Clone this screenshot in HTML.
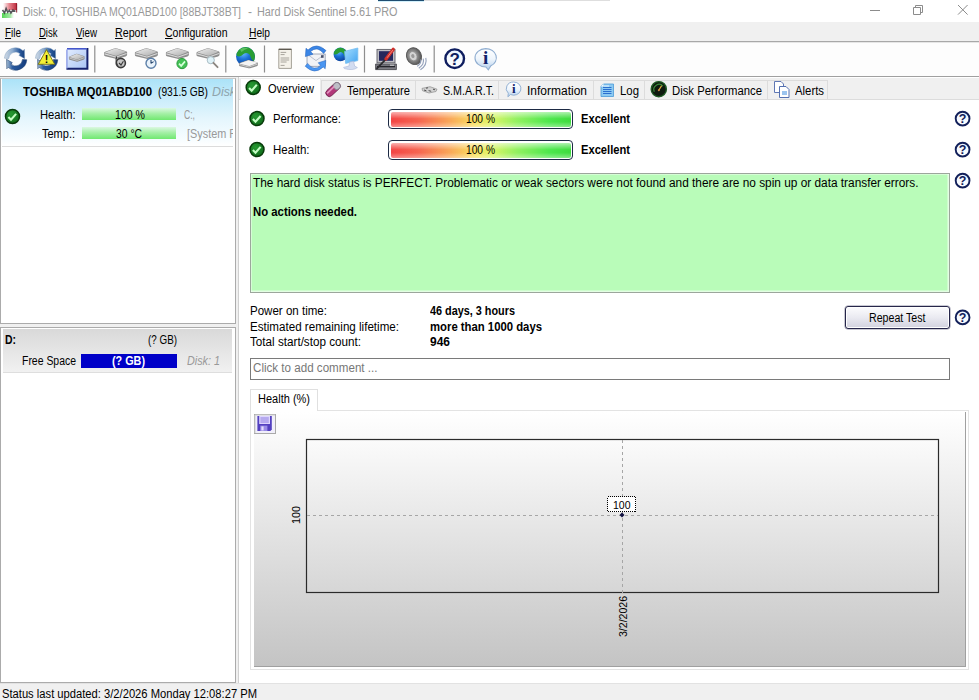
<!DOCTYPE html>
<html><head><meta charset="utf-8"><title>Hard Disk Sentinel</title>
<style>
html,body{margin:0;padding:0}
body{width:979px;height:700px;overflow:hidden;background:#fff;position:relative;font-family:'Liberation Sans',sans-serif;font-size:12px}
.a{position:absolute}
.t{position:absolute;white-space:pre;line-height:14px;height:14px;transform-origin:0 0;font-family:'Liberation Sans',sans-serif}
svg{position:absolute;overflow:visible}
.tab{top:80px;height:20px;background:#f0f0f0;border:1px solid #dcdcdc;box-sizing:border-box}
.bar{width:185px;height:20px;box-sizing:border-box;border:1px solid #1d2a44;border-radius:4px;background:#fff;padding:1.5px 1.5px}
.bar div{width:100%;height:100%;border-radius:2px;background:linear-gradient(rgba(255,255,255,.6),rgba(255,255,255,.05) 45%,rgba(255,255,255,.05) 65%,rgba(255,255,255,.4)),linear-gradient(90deg,#f23a3a 0%,#f55c48 15%,#f9a050 32%,#f8e058 47%,#d8f460 56%,#8cf058 70%,#44e644 88%,#34da34 100%)}

</style></head>
<body>
<!-- title bar -->
<div class="a" style="left:0;top:0;width:979px;height:22px;background:#fff"></div>
<div class="a" style="left:378px;top:0;width:46px;height:1px;background:#1f4d70"></div><div class="a" style="left:378px;top:1px;width:46px;height:1px;background:#d2f0fb"></div><div class="a" style="left:424px;top:0;width:186px;height:1px;background:#dedede"></div>
<!-- menu bar -->
<div class="a" style="left:0;top:22px;width:979px;height:20px;background:#f0f0f0"></div>
<div class="a" style="left:0;top:41px;width:979px;height:1px;background:#a8a8a8"></div><div class="a" style="left:0;top:42px;width:979px;height:1px;background:#e6e6e6"></div>
<!-- toolbar -->
<div class="a" style="left:0;top:43px;width:979px;height:33px;background:#fdfdfd"></div>
<div class="a" style="left:0;top:76px;width:979px;height:1px;background:#a0a0a0"></div>
<!-- main bg -->
<div class="a" style="left:0;top:77px;width:979px;height:607px;background:#f0f0f0"></div>
<!-- left upper panel -->
<div class="a" style="left:0;top:78px;width:234px;height:244px;background:#fff;border:1px solid #ababab;border-top-color:#c8c8c8"></div>
<div class="a" style="left:2px;top:79px;width:231px;height:67px;background:linear-gradient(#abe3f8 0%,#cbedfb 30%,#e5f6fd 60%,#f8fdff 92%,#ffffff 100%);border-bottom:1px solid #dcdcdc"></div>
<!-- left lower panel -->
<div class="a" style="left:0;top:327px;width:234px;height:354px;background:#fff;border:1px solid #ababab"></div>
<div class="a" style="left:3px;top:329px;width:229px;height:43px;background:linear-gradient(#d9d9d9,#f1f1f1);border-bottom:1px solid #dedede"></div>
<div class="a" style="left:81px;top:354px;width:96px;height:14px;background:#0000c8"></div>
<!-- health bars left -->
<div class="a" style="left:82px;top:108px;width:94px;height:12px;background:linear-gradient(#dbf8e2,#a6f0a8 45%,#70e870)"></div>
<div class="a" style="left:82px;top:127px;width:94px;height:12px;background:linear-gradient(#dbf8e2,#a6f0a8 45%,#70e870)"></div>
<!-- right panel -->
<div class="a" style="left:238px;top:77px;width:741px;height:607px;background:#fff;border-left:1px solid #d0d0d0"></div>
<div class="a" style="left:239px;top:78px;width:740px;height:21px;background:#f0f0f0"></div>
<div class="a" style="left:239px;top:99px;width:740px;height:1px;background:#dcdcdc"></div>
<!-- status bar -->
<div class="a" style="left:0;top:683px;width:979px;height:17px;background:#f0f0f0;border-top:1px solid #e2e2e2;box-sizing:border-box"></div>
<!-- tabs -->
<div class="a" style="left:240px;top:78px;width:81px;height:22px;background:#fff;border:1px solid #ececec;border-bottom:0;box-sizing:border-box"></div>
<div class="a tab" style="left:321px;width:95px"></div>
<div class="a tab" style="left:415px;width:84px"></div>
<div class="a tab" style="left:498px;width:96px"></div>
<div class="a tab" style="left:593px;width:52px"></div>
<div class="a tab" style="left:644px;width:124px"></div>
<div class="a tab" style="left:767px;width:61px"></div>
<!-- perf/health bars -->
<div class="a bar" style="left:388px;top:109px"><div></div></div>
<div class="a bar" style="left:388px;top:140px"><div></div></div>
<!-- green box -->
<div class="a" style="left:250px;top:173px;width:700px;height:120px;box-sizing:border-box;background:#b9fcb9;border:1px solid #9ca69c;box-shadow:inset 1px 1px 0 rgba(255,255,255,.4),inset -1.5px -1.5px 0 rgba(255,255,255,.6)"></div>
<!-- repeat test button -->
<div class="a" style="left:845px;top:306px;width:105px;height:23px;box-sizing:border-box;border:1px solid #26264a;border-radius:3px;background:linear-gradient(#fcfcfe,#eaeaf1 50%,#d2d2df);box-shadow:inset 0 0 0 1px #fff, 0 0 0 .5px rgba(40,40,80,.5)"></div>
<!-- comment box -->
<div class="a" style="left:250px;top:358px;width:700px;height:22px;box-sizing:border-box;background:#fff;border:1px solid #7a7a7a"></div>
<!-- health(%) tab + page -->
<div class="a" style="left:250px;top:410px;width:719px;height:260px;box-sizing:border-box;background:#fff;border:1px solid #e3e3e3"></div>
<div class="a" style="left:250px;top:389px;width:68px;height:22px;box-sizing:border-box;background:#fff;border:1px solid #e0e0e0;border-bottom:0"></div>
<!-- chart -->
<div class="a" style="left:254px;top:412px;width:712px;height:255px;box-sizing:border-box;background:linear-gradient(#ffffff,#c4c4c4);border-right:1px solid #a0a0a0;border-bottom:1px solid #a0a0a0"></div>
<svg style="left:0;top:0" width="979" height="700" viewBox="0 0 979 700">
 <defs><linearGradient id="pg" x1="0" y1="0" x2="0" y2="1"><stop offset="0" stop-color="#fbfbfb"/><stop offset="1" stop-color="#d6d6d6"/></linearGradient></defs>
 <rect x="306.5" y="439.5" width="632" height="153" fill="url(#pg)" stroke="#2a2a2a" stroke-width="1.2"/>
 <line x1="307" y1="515.5" x2="938" y2="515.5" stroke="#a6a6a6" stroke-width="1" stroke-dasharray="3,3"/>
 <line x1="622.5" y1="440" x2="622.5" y2="596" stroke="#a6a6a6" stroke-width="1" stroke-dasharray="3,3"/>
 <rect x="607.5" y="496.5" width="28" height="15" fill="#fff" stroke="#000" stroke-width="1" stroke-dasharray="1 1" shape-rendering="crispEdges"/>
 <path d="M622 512.5 l2.5 2.5 l-2.5 2.5 l-2.5 -2.5z" fill="#101040"/>
 <text transform="translate(300,524) rotate(-90)" font-family="Liberation Sans, sans-serif" font-size="11" fill="#000" textLength="18" lengthAdjust="spacingAndGlyphs">100</text>
 <text transform="translate(626.5,637) rotate(-90)" font-family="Liberation Sans, sans-serif" font-size="11" fill="#000" textLength="41" lengthAdjust="spacingAndGlyphs">3/2/2026</text>
</svg>
<svg style="left:0;top:0" width="979" height="700" viewBox="0 0 979 700">
<defs>
 <radialGradient id="gck" cx="0.4" cy="0.35" r="0.7"><stop offset="0" stop-color="#279a32"/><stop offset="1" stop-color="#0f6a1a"/></radialGradient>
 <g id="ck"><circle r="7" fill="url(#gck)" stroke="#083a0a" stroke-width="1.5"/><path d="M-4.1 0.5 L-1.5 3.2 L3.6 -2.6" fill="none" stroke="#c4fcc4" stroke-width="2.1"/></g>
 <linearGradient id="bub2" x1="0" y1="0" x2="0" y2="1"><stop offset="0" stop-color="#ffffff"/><stop offset=".5" stop-color="#eef5fc"/><stop offset="1" stop-color="#b4cfec"/></linearGradient>
 <linearGradient id="ghp" x1="0" y1="0" x2="0" y2="1"><stop offset="0" stop-color="#eaf4ff"/><stop offset="1" stop-color="#ffffff"/></linearGradient>
 <g id="hp"><circle r="6.9" fill="url(#ghp)" stroke="#12205a" stroke-width="1.9"/><text x="0" y="4.4" text-anchor="middle" font-family="Liberation Sans, sans-serif" font-weight="bold" font-size="12.5" fill="#12205a">?</text></g>
</defs>
<!-- check icons -->
<use href="#ck" x="253.2" y="87.4"/>
<use href="#ck" x="257" y="118.6"/>
<use href="#ck" x="257" y="149.5"/>
<use href="#ck" x="12.5" y="116.5"/>
<!-- help icons -->
<use href="#hp" x="962.6" y="118.6"/>
<use href="#hp" x="962.6" y="149.6"/>
<use href="#hp" x="962.6" y="180.6"/>
<use href="#hp" x="962.6" y="317.4"/>
<!-- temperature icon -->
<g transform="translate(333.1,89.5) rotate(-43)">
 <rect x="-8.6" y="-3.5" width="17.2" height="7" rx="3.5" fill="#b2387a" stroke="#74204e" stroke-width="0.9"/>
 <rect x="1.6" y="-3.5" width="7" height="7" rx="3.4" fill="#bdbdc6" stroke="#80808a" stroke-width="0.9"/>
 <rect x="-7" y="-2.2" width="10" height="1.7" fill="#eaa0c8" opacity=".85"/>
</g>
<!-- smart icon -->
<path d="M422 88.4 l8 -1.7 l7 2.5 l-1 2.3 l-7 1.5 l-6.5 -2.3z" fill="#d2d2d2" stroke="#8c8c8c" stroke-width="0.7"/>
<path d="M424 90 l2.4 .8 M428.6 90.6 l2.6 .7 M433 89.2 l2 .6 M426 88.2 l2 -.4" stroke="#444" stroke-width=".9"/>
<!-- information icon (tab) -->
<g transform="translate(513.7,89)">
 <path d="M0 -7 a7.2 6.6 0 1 1 -3.2 12.5 l-2.6 2.3 l0.4 -3.6 a7.2 6.6 0 0 1 5.4 -11.2z" fill="url(#bub2)" stroke="#94b2d4" stroke-width="1"/>
 <text x="0" y="4" text-anchor="middle" font-family="Liberation Serif, serif" font-weight="bold" font-size="13" fill="#10226a">i</text>
</g>
<!-- log icon -->
<g transform="translate(601,84)">
 <path d="M0 2.5 L2.5 0 H12.5 V12.5 H0z" fill="#8ccaf2" stroke="#4a9ad8" stroke-width="0.8"/>
 <path d="M0 2.5 L2.5 0 V2.5z" fill="#fff"/>
 <path d="M2 3.5h8.5M2 5.5h8.5M2 7.5h8.5M2 9.5h8.5" stroke="#2a6fd0" stroke-width="1"/>
 <path d="M3 2h5" stroke="#eaf6ff" stroke-width="1"/>
</g>
<!-- disk performance icon -->
<g transform="translate(658.8,89.2)">
 <circle r="7.6" fill="#0e1a0e" stroke="#1f5a24" stroke-width="1.4"/>
 <path d="M-4.5 2.5 A5.2 5.2 0 0 1 4.2 -3" fill="none" stroke="#3a8a3a" stroke-width="1.2"/>
 <path d="M0 1 L2.8 -3.5" stroke="#e8b040" stroke-width="1.2"/>
 <circle r="1" cy="1" fill="#c84"/>
</g>
<!-- alerts icon -->
<g transform="translate(774,81)">
 <path d="M0.5 0.5 H7 L9.5 3 V11.5 H0.5z" fill="#fff" stroke="#6078b4" stroke-width="1"/>
 <path d="M5.5 5.5 H12 L15 8.5 V16.5 H5.5z" fill="#fff" stroke="#5470b0" stroke-width="1"/>
 <rect x="8" y="10" width="5" height="4" fill="#9cc4ee"/>
</g>
</svg>
<svg style="left:0;top:0" width="979" height="700" viewBox="0 0 979 700">
<defs>
 <linearGradient id="ra" x1="0" y1="0" x2="1" y2="0"><stop offset="0" stop-color="#d3dce6"/><stop offset=".4" stop-color="#8daccf"/><stop offset=".75" stop-color="#2b5a9c"/><stop offset="1" stop-color="#15407f"/></linearGradient>
 <linearGradient id="rb" x1="0" y1="0" x2="1" y2="0"><stop offset="0" stop-color="#a4bcd2"/><stop offset=".3" stop-color="#2a5a9e"/><stop offset="1" stop-color="#143c7c"/></linearGradient>
 <g id="rf">
  <path d="M-11.17 -0.78 A11.2 11.2 0 0 1 7.49 -8.32 L8.83 -9.81 L9.04 -0.32 L3.28 -3.64 L4.62 -5.13 A6.9 6.9 0 0 0 -6.88 -0.48 Z" fill="url(#ra)" stroke="#6f8fb4" stroke-width=".4"/>
  <path d="M11.17 0.78 A11.2 11.2 0 0 1 -7.49 8.32 L-8.83 9.81 L-9.04 0.32 L-3.28 3.64 L-4.62 5.13 A6.9 6.9 0 0 0 6.88 0.48 Z" fill="url(#rb)" stroke="#143667" stroke-width=".5"/>
 </g>
 <linearGradient id="dkt" x1="0" y1="0" x2="1" y2="1"><stop offset="0" stop-color="#ededed"/><stop offset="1" stop-color="#adadad"/></linearGradient>
 <g id="dk">
  <path d="M0.5 5.2 Q0 4.2 1.5 3.6 L10.5 0.4 Q12 0 13.5 0.4 L22.5 3 Q24 3.6 23.5 4.6 V6.6 Q23.4 7.4 22 8 L14 10.2 Q12.5 10.6 11 10 L1.5 7.8 Q0.4 7.4 0.5 6.6 Z" fill="#8d8d8d"/>
  <path d="M1.2 4.4 L11 0.8 Q12 0.5 13 0.8 L22.8 3.6 L13.6 7.2 Q12.4 7.6 11.2 7.2 Z" fill="url(#dkt)"/>
  <path d="M1 5.6 L11.2 8.4 Q12.4 8.8 13.6 8.4 L23 5.2" fill="none" stroke="#d9d9d9" stroke-width="1"/>
 </g>
 <radialGradient id="gl" cx=".38" cy=".3" r=".75"><stop offset="0" stop-color="#6ec0ff"/><stop offset=".45" stop-color="#1d74d8"/><stop offset="1" stop-color="#0a3c94"/></radialGradient>
 <linearGradient id="winf" x1="0" y1="0" x2="1" y2="1"><stop offset="0" stop-color="#e2ecfe"/><stop offset="1" stop-color="#a9c4f4"/></linearGradient>
 <linearGradient id="monf" x1="0" y1="0" x2="1" y2="1"><stop offset="0" stop-color="#a4deff"/><stop offset="1" stop-color="#44a4f0"/></linearGradient>
 <radialGradient id="spk" cx=".45" cy=".45" r=".6"><stop offset="0" stop-color="#d8d8d8"/><stop offset=".5" stop-color="#8a8a8a"/><stop offset="1" stop-color="#4c4c4c"/></radialGradient>
 <linearGradient id="bub" x1="0" y1="0" x2="0" y2="1"><stop offset="0" stop-color="#ffffff"/><stop offset=".5" stop-color="#eef5fc"/><stop offset="1" stop-color="#b4cfec"/></linearGradient>
</defs>
<!-- separators -->
<g stroke="#8e8e8e" stroke-width="1.2">
 <path d="M94.8 45.5V72.5M225.8 45.5V72.5M264.5 45.5V72.5M364.5 45.5V72.5M434.2 45.5V72.5"/>
</g>
<!-- refresh -->
<use href="#rf" x="15.6" y="59"/>
<!-- refresh + warning -->
<use href="#rf" x="46.6" y="59"/>
<path d="M46.5 49.6 L54.8 64.3 H38.2 Z" fill="#f3ef36" stroke="#6c6a18" stroke-width=".9" stroke-linejoin="round"/>
<text x="46.5" y="62.8" text-anchor="middle" font-family="Liberation Sans, sans-serif" font-weight="bold" font-size="10.5" fill="#000">!</text>
<!-- window with disk -->
<rect x="67" y="49" width="20.5" height="20" fill="url(#winf)"/>
<path d="M87.4 48 V68.8 H66.4" fill="none" stroke="#16226e" stroke-width="2"/>
<path d="M67 48.8 H86.6" fill="none" stroke="#4658cc" stroke-width="1.6"/><path d="M66.9 68.4 V49.6" fill="none" stroke="#8c9ce6" stroke-width="1.4"/>
<g transform="translate(68.6,53.6) scale(.68,.78)"><use href="#dk"/></g>
<!-- disk icons -->
<g transform="translate(103.6,48) scale(1,1.05)"><use href="#dk"/></g>
<circle cx="120.8" cy="63" r="4.6" fill="#c6c6c6" stroke="#3a3a3a" stroke-width="1.6"/>
<path d="M116.6 56.5 q-1.5 5 1.5 9.5 M119 63 l2 2 l2.4 -3.8" fill="none" stroke="#3a3a3a" stroke-width="1.1"/>
<g transform="translate(134.4,48) scale(1,1.05)"><use href="#dk"/></g>
<circle cx="151" cy="63.2" r="5" fill="#eaf3fb" stroke="#5c7fa8" stroke-width="1.4"/>
<path d="M151 63.4 V60 M151 63.4 L153.6 61.6" stroke="#26466e" stroke-width="1.1" fill="none"/>
<g transform="translate(165.4,48) scale(1,1.05)"><use href="#dk"/></g>
<circle cx="182" cy="63.6" r="5.1" fill="#44c256" stroke="#2a9a3c" stroke-width="1"/>
<path d="M179 63.6 l2.2 2.3 l3.8 -4.5" fill="none" stroke="#d6ffd9" stroke-width="1.7"/>
<g transform="translate(196,48) scale(1,1.05)"><use href="#dk"/></g>
<circle cx="210.8" cy="60.2" r="3.6" fill="#dff2f8" stroke="#a9bcc4" stroke-width="1"/>
<path d="M213.4 62.8 L217.6 67.2" stroke="#8c8680" stroke-width="1.8" stroke-linecap="round"/>
<!-- globe + disk -->
<clipPath id="gc1"><circle cx="245.5" cy="56.6" r="9.5"/></clipPath>
<circle cx="245.5" cy="56.6" r="9.5" fill="url(#gl)"/>
<g clip-path="url(#gc1)"><path d="M236 54 Q238 47 246 46.5 Q254 47 256 56 L255 62 Q251 60 250 55 Q247 51.5 243.5 54 Q240.5 57.5 237 56 Z" fill="#2a9e34"/><path d="M240 49.5 Q244 46.6 248 48.5 Q244.5 49 241.5 52z" fill="#6fd070" opacity=".7"/></g>
<g transform="translate(238.6,59.8) scale(.82)"><use href="#dk"/></g>
<path d="M239.4 63.4 l9.2 -3 l9.2 2.4 l-8.4 3.2z" fill="#f4f4f4"/>
<!-- document -->
<path d="M278.8 49 H291.4 V68.4 H278.8 Z" fill="#f5f2ea" stroke="#9a968c" stroke-width=".9"/>
<path d="M278.8 49.4 H291.4" stroke="#5e5a52" stroke-width="1.2"/>
<path d="M280.6 52.4h5.6M280.6 54.6h4M280.6 58h8.6M280.6 60h8.6M280.6 62h6M280.6 65.4h4" stroke="#a8a49c" stroke-width="1"/>
<!-- mail sync -->
<path d="M307 54 H325.2 V66.4 H307 Z" fill="#f1f2f6" stroke="#98a0b2" stroke-width=".9"/>
<path d="M307 54 L316 60.6 L325.2 54" fill="none" stroke="#b4bac8" stroke-width=".9"/>
<rect x="321" y="55.2" width="2.6" height="2.6" fill="#47506a"/>
<path d="M323.6 53.4 Q317 45.4 310.6 51.6 L313 54.2 L305.4 56.6 L306 48.2 L308 50 Q316.6 41.6 326 50.6 Z" fill="#3b86e6" stroke="#1d5cb8" stroke-width=".5"/>
<path d="M307.6 63.4 Q314.2 71.6 320.6 65.4 L318.2 62.8 L325.8 60.4 L325.2 68.8 L323.2 67 Q314.6 75.4 305.2 66.2 Z" fill="#4a96f2" stroke="#1d5cb8" stroke-width=".5"/>
<!-- network monitor -->
<clipPath id="gc2"><circle cx="340.4" cy="54.4" r="6.8"/></clipPath>
<circle cx="340.4" cy="54.4" r="6.8" fill="url(#gl)"/>
<g clip-path="url(#gc2)"><path d="M333.5 53 Q335 48 340.5 47.4 Q346 48 347.5 54 L347 58.5 Q344 57 343.4 53.6 Q341.4 51 339 52.8 Q337 55 334 54.4 Z" fill="#2a9e34"/></g>
<path d="M344.6 51.4 L357.8 48 V60.6 L345.6 63.4 Z" fill="url(#monf)" stroke="#74bdf0" stroke-width=".8"/>
<path d="M349.6 62 L353.6 61.2 L354.6 66 L357.4 67.6 Q353 71 344.4 68.6 L343.6 67.4 L349 66 Z" fill="#d2dcf0" stroke="#a8b6d6" stroke-width=".6"/>
<!-- computer + screwdriver -->
<rect x="377" y="49.4" width="18" height="13.4" fill="#bdbdc4" stroke="#5d5d66" stroke-width=".9"/>
<rect x="379" y="51.2" width="14" height="9.6" fill="#25275c"/>
<path d="M375.6 64 H396.4 V69.6 H375.6 Z" fill="#7d7d84" stroke="#3d3d44" stroke-width=".8"/>
<path d="M377 66.6 H395" stroke="#24242a" stroke-width="1.4"/>
<path d="M390 65.2h4" stroke="#d8d8d8" stroke-width="1"/>
<path d="M377 68.4 L386.4 58.6" stroke="#2a2a2e" stroke-width="1.7" stroke-linecap="round"/>
<path d="M386 59 L393.2 49.4" stroke="#cf2f2a" stroke-width="3.4" stroke-linecap="round"/>
<path d="M387.4 57.4 L392.6 50.4" stroke="#f08278" stroke-width="1" stroke-linecap="round"/>
<!-- speaker -->
<g transform="translate(414,56.2) rotate(-24)">
 <ellipse rx="7.4" ry="8.6" fill="url(#spk)" stroke="#565656" stroke-width=".9"/>
 <ellipse rx="3.8" ry="4.8" cx="-.8" cy="-.4" fill="#d4d4d4" stroke="#8a8a8a" stroke-width=".7"/>
 <ellipse rx="1.6" ry="2" cx="-1" cy="-.6" fill="#9a9a9a"/>
</g>
<path d="M420.6 59.4 q1.2 3.6 -3.4 7 M423.2 58.6 q1.6 5.4 -4.4 9.6 M425.8 57.8 q1.8 7 -5.4 12" fill="none" stroke="#93a0ba" stroke-width="1.1"/>
<!-- help big -->
<circle cx="454.7" cy="58.7" r="10.4" fill="#bcd8f4" opacity=".55"/><circle cx="454.7" cy="58.7" r="9.3" fill="url(#ghp)" stroke="#0f1d5e" stroke-width="2.4"/>
<text x="454.7" y="64.8" text-anchor="middle" font-family="Liberation Sans, sans-serif" font-weight="bold" font-size="17" fill="#0f1d5e">?</text>
<!-- info big -->
<path d="M485.7 48.6 a10.8 9.2 0 0 1 5.2 17.2 l-2.6 4 l-2.4 -2.8 a10.8 9.2 0 1 1 -.2 -18.4z" fill="url(#bub)" stroke="#8fadd0" stroke-width="1.1"/>
<text x="485.7" y="64.2" text-anchor="middle" font-family="Liberation Serif, serif" font-weight="bold" font-size="19" fill="#10226a">i</text>
</svg>
<svg style="left:0;top:0" width="979" height="700" viewBox="0 0 979 700">
<defs>
 <linearGradient id="apr" x1="0" y1="0" x2="1" y2="0"><stop offset="0" stop-color="#e06a74" stop-opacity="0"/><stop offset=".45" stop-color="#dc5a66" stop-opacity=".75"/><stop offset="1" stop-color="#b82436"/></linearGradient>
 <linearGradient id="apg" x1="0" y1="0" x2="1" y2="0"><stop offset="0" stop-color="#52d452"/><stop offset=".7" stop-color="#7fe07f" stop-opacity=".7"/><stop offset="1" stop-color="#9fe89f" stop-opacity="0"/></linearGradient>
</defs>
<!-- app icon -->
<rect x="3" y="3" width="14" height="7" fill="url(#apr)"/>
<rect x="16" y="3.5" width="1.2" height="9" fill="#8a1a2a" opacity=".8"/>
<rect x="2" y="13" width="12" height="5" fill="url(#apg)"/>
<path d="M2.5 10 l2 3 l1.6 -4.6 l1.6 4 l1.6 -2 l1.6 2.6 l2 -3 l2.6 1.4" fill="none" stroke="#3a3a40" stroke-width="1.5" opacity=".85"/>
<!-- window controls -->
<g stroke="#8c8c8c" stroke-width="1" fill="none">
 <path d="M870 10.5 H880"/>
 <path d="M913.5 7.5 H920.5 V14.5 H913.5 Z"/>
 <path d="M915.5 7.5 V5.5 H922.5 V12.5 H920.5"/>
 <path d="M958 5 L967.6 14.6 M967.6 5 L958 14.6"/>
</g>
<!-- save icon -->
<rect x="254.5" y="414.5" width="21" height="19" fill="#f1effa" stroke="#a9a9a9" stroke-width="1"/>
<path d="M255 433 V415 H275" fill="none" stroke="#cfcfcf" stroke-width="1"/>
<path d="M257.4 416 H271.8 V429.6 L270.4 431 H257.4 Z" fill="#5340c0"/>
<rect x="259.2" y="416" width="10.8" height="8" fill="#ded6fd"/>
<path d="M260.4 418h8.4M260.4 420h8.4M260.4 422h8.4" stroke="#8474dc" stroke-width=".9"/>
<rect x="260.2" y="425.6" width="7.2" height="5.4" fill="#9a8ce6"/>
<rect x="261.4" y="426.4" width="2.2" height="4" fill="#e4defc"/>
</svg>

<span class="t" style="left:22.5px;top:4.7px;font-size:12px;color:#999;transform:scaleX(0.8755);">Disk: 0, TOSHIBA MQ01ABD100 [88BJT38BT]</span>
<span class="t" style="left:248px;top:4.7px;font-size:12px;color:#999;transform:scaleX(1.0000);">-</span>
<span class="t" style="left:257px;top:4.7px;font-size:12px;color:#999;transform:scaleX(0.9041);">Hard Disk Sentinel 5.61 PRO</span>
<span class="t" style="left:5px;top:25.6px;font-size:12px;color:#000;transform:scaleX(0.8271);"><u>F</u>ile</span>
<span class="t" style="left:39px;top:25.6px;font-size:12px;color:#000;transform:scaleX(0.7925);"><u>D</u>isk</span>
<span class="t" style="left:76px;top:25.6px;font-size:12px;color:#000;transform:scaleX(0.8141);"><u>V</u>iew</span>
<span class="t" style="left:115px;top:25.6px;font-size:12px;color:#000;transform:scaleX(0.8881);"><u>R</u>eport</span>
<span class="t" style="left:165px;top:25.6px;font-size:12px;color:#000;transform:scaleX(0.8755);"><u>C</u>onfiguration</span>
<span class="t" style="left:249px;top:25.6px;font-size:12px;color:#000;transform:scaleX(0.8506);"><u>H</u>elp</span>
<span class="t" style="left:23px;top:84.8px;font-size:12px;color:#000;font-weight:bold;transform:scaleX(0.9529);">TOSHIBA MQ01ABD100</span>
<span class="t" style="left:157.5px;top:84.8px;font-size:12px;color:#000;transform:scaleX(0.8517);">(931.5 GB)</span>
<div class="a" style="left:212px;top:84.8px;width:20.5px;height:15px;overflow:hidden"><span class="t" style="left:0;top:0;font-size:12px;color:#8fa4ac;font-style:italic;transform:scaleX(1.0281);">Disk</span></div>
<span class="t" style="left:40px;top:108.2px;font-size:12px;color:#000;transform:scaleX(0.9334);">Health:</span>
<span class="t" style="left:42px;top:127px;font-size:12px;color:#000;transform:scaleX(0.9163);">Temp.:</span>
<span class="t" style="left:115px;top:108.2px;font-size:12px;color:#000;transform:scaleX(0.8815);">100 %</span>
<span class="t" style="left:116px;top:127px;font-size:12px;color:#000;transform:scaleX(0.8622);">30 °C</span>
<span class="t" style="left:184px;top:108.2px;font-size:12px;color:#999;transform:scaleX(0.7169);">C:,</span>
<div class="a" style="left:187px;top:127px;width:45.5px;height:15px;overflow:hidden"><span class="t" style="left:0;top:0;font-size:12px;color:#999;transform:scaleX(0.9071);">[System F</span></div>
<span class="t" style="left:5px;top:332.8px;font-size:12px;color:#000;font-weight:bold;transform:scaleX(0.8681);">D:</span>
<span class="t" style="left:148px;top:332.8px;font-size:12px;color:#000;transform:scaleX(0.8205);">(? GB)</span>
<span class="t" style="left:22px;top:354.4px;font-size:12px;color:#000;transform:scaleX(0.8703);">Free Space</span>
<span class="t" style="left:112px;top:354.4px;font-size:12px;color:#fff;font-weight:bold;transform:scaleX(0.9003);">(? GB)</span>
<span class="t" style="left:187px;top:354.4px;font-size:12px;color:#999;font-style:italic;transform:scaleX(0.8995);">Disk: 1</span>
<span class="t" style="left:267.5px;top:81.8px;font-size:12px;color:#000;transform:scaleX(0.9197);">Overview</span>
<span class="t" style="left:347px;top:84.2px;font-size:12px;color:#000;transform:scaleX(0.9351);">Temperature</span>
<span class="t" style="left:443px;top:84.2px;font-size:12px;color:#000;transform:scaleX(0.8894);">S.M.A.R.T.</span>
<span class="t" style="left:527px;top:84.2px;font-size:12px;color:#000;transform:scaleX(0.9995);">Information</span>
<span class="t" style="left:620px;top:84.2px;font-size:12px;color:#000;transform:scaleX(0.9485);">Log</span>
<span class="t" style="left:672px;top:84.2px;font-size:12px;color:#000;transform:scaleX(0.9436);">Disk Performance</span>
<span class="t" style="left:795px;top:84.2px;font-size:12px;color:#000;transform:scaleX(0.9450);">Alerts</span>
<span class="t" style="left:272.5px;top:112.3px;font-size:12px;color:#000;transform:scaleX(0.9440);">Performance:</span>
<span class="t" style="left:272.5px;top:143.2px;font-size:12px;color:#000;transform:scaleX(0.9597);">Health:</span>
<span class="t" style="left:466px;top:112.2px;font-size:12px;color:#000;transform:scaleX(0.8522);">100 %</span>
<span class="t" style="left:466px;top:143.2px;font-size:12px;color:#000;transform:scaleX(0.8522);">100 %</span>
<span class="t" style="left:581px;top:112.2px;font-size:12px;color:#000;font-weight:bold;transform:scaleX(0.9297);">Excellent</span>
<span class="t" style="left:581px;top:143.2px;font-size:12px;color:#000;font-weight:bold;transform:scaleX(0.9297);">Excellent</span>
<span class="t" style="left:252.6px;top:176.2px;font-size:12px;color:#000;transform:scaleX(0.9869);">The hard disk status is PERFECT. Problematic or weak sectors were not found and there are no spin up or data transfer errors.</span>
<span class="t" style="left:252.6px;top:205px;font-size:12px;color:#000;font-weight:bold;transform:scaleX(0.9452);">No actions needed.</span>
<span class="t" style="left:250px;top:304.3px;font-size:12px;color:#000;transform:scaleX(0.9619);">Power on time:</span>
<span class="t" style="left:250px;top:320.2px;font-size:12px;color:#000;transform:scaleX(0.9671);">Estimated remaining lifetime:</span>
<span class="t" style="left:250px;top:335.4px;font-size:12px;color:#000;transform:scaleX(0.9732);">Total start/stop count:</span>
<span class="t" style="left:430px;top:304.3px;font-size:12px;color:#000;font-weight:bold;transform:scaleX(0.9038);">46 days, 3 hours</span>
<span class="t" style="left:430px;top:320.2px;font-size:12px;color:#000;font-weight:bold;transform:scaleX(0.9433);">more than 1000 days</span>
<span class="t" style="left:430px;top:335.4px;font-size:12px;color:#000;font-weight:bold;transform:scaleX(0.9984);">946</span>
<span class="t" style="left:253px;top:361px;font-size:12px;color:#777;transform:scaleX(0.9672);">Click to add comment ...</span>
<span class="t" style="left:258px;top:392px;font-size:12px;color:#000;transform:scaleX(0.9173);">Health (%)</span>
<span class="t" style="left:868.5px;top:311.3px;font-size:12px;color:#000;transform:scaleX(0.8852);">Repeat Test</span>
<span class="t" style="left:2px;top:686.5px;font-size:12px;color:#000;transform:scaleX(0.9323);">Status last updated: 3/2/2026 Monday 12:08:27 PM</span>
<span class="t" style="left:613px;top:497.6px;font-size:11px;color:#000;transform:scaleX(0.9532);">100</span>
</body></html>
